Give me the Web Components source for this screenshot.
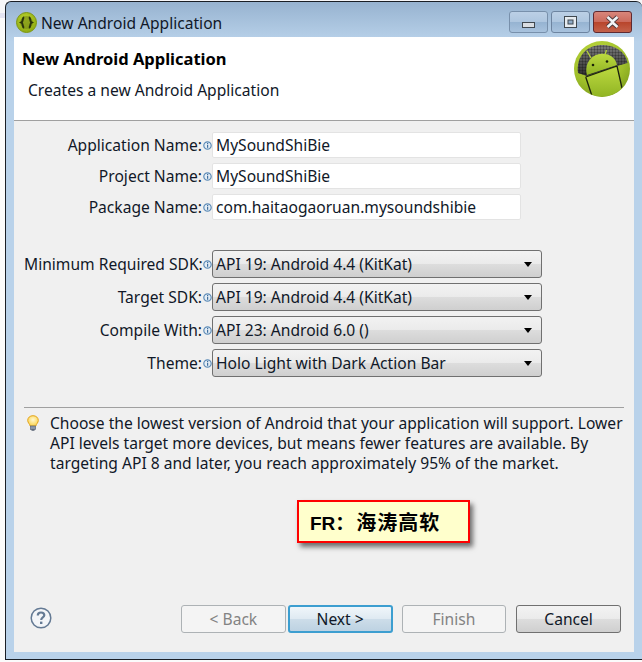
<!DOCTYPE html>
<html><head><meta charset="utf-8">
<style>
html,body{margin:0;padding:0;background:#fff;}
body{width:642px;height:662px;overflow:hidden;font:15.6px "Noto Sans","Open Sans",sans-serif;color:#101828;background:linear-gradient(#f6f6f8 13px,#e4e4f2 13px,#e4e4f2 18px,#fbfbfb 18px);}
</style></head><body>
<wizard-window heading="New Android Application">
  <wizard-header slot="header" title-text="New Android Application" sub="Creates a new Android Application"></wizard-header>
  <form-grid>
    <text-row label="Application Name:" value="MySoundShiBie"></text-row>
    <text-row label="Project Name:" value="MySoundShiBie"></text-row>
    <text-row label="Package Name:" value="com.haitaogaoruan.mysoundshibie"></text-row>
    <combo-row label="Minimum Required SDK:" value="API 19: Android 4.4 (KitKat)" style="margin-top:25px"></combo-row>
    <combo-row label="Target SDK:" value="API 19: Android 4.4 (KitKat)"></combo-row>
    <combo-row label="Compile With:" value="API 23: Android 6.0 ()"></combo-row>
    <combo-row label="Theme:" value="Holo Light with Dark Action Bar"></combo-row>
  </form-grid>
  <tip-box>Choose the lowest version of Android that your application will support. Lower API levels target more devices, but means fewer features are available. By targeting API 8 and later, you reach approximately 95% of the market.</tip-box>
  <button-bar slot="footer">
    <wiz-button disabled style="margin-left:0">&lt; Back</wiz-button>
    <wiz-button default style="margin-left:2px">Next &gt;</wiz-button>
    <wiz-button disabled style="margin-left:9px">Finish</wiz-button>
    <wiz-button style="margin-left:9px">Cancel</wiz-button>
  </button-bar>
  <note-callout slot="overlay">FR：<span>海涛高软</span></note-callout>
</wizard-window>
<script>
function def(name,css,html){
  customElements.define(name,class extends HTMLElement{
    connectedCallback(){
      if(this.shadowRoot)return;
      const r=this.attachShadow({mode:'open'});
      const a=n=>this.getAttribute(n)||'';
      r.innerHTML='<style>'+css+'</style>'+(typeof html==='function'?html(a):html);
    }
  });
}
const infoIcon='<svg width="9" height="9" viewBox="0 0 9 9"><circle cx="4.5" cy="4.5" r="3.7" fill="#e4edf5" stroke="#5f8db8" stroke-width="1.2"/><rect x="4" y="2" width="1.2" height="1.1" fill="#3f6f9f"/><rect x="4" y="3.8" width="1.2" height="3" fill="#3f6f9f"/></svg>';

def('wizard-window',`
:host{display:block;position:relative;width:637px;height:659px;margin:1px 0 0 5px;box-sizing:border-box;border:1px solid #1a1f26;border-right:0;border-radius:6px 6px 0 0;
  background:linear-gradient(#97b3d0,#b9d2ea 40px);padding:0 8px 7px 8px;overflow:hidden}
.title{height:35px;display:flex;align-items:center;gap:4px;padding:6px 0 0 2px;color:#101828;font-size:15.6px;box-sizing:border-box}
.ctrls{margin-left:auto;margin-right:2px;margin-top:-2px;display:flex;gap:3px}
.ctrls svg{display:block}
.body{height:615px;display:flex;flex-direction:column;background:#f0f0f0}
.main{flex:1}
`,a=>`
<div class="title">
 <svg width="21" height="21" viewBox="0 0 21 21"><defs><radialGradient id="t" cx=".45" cy=".35" r=".7"><stop offset="0" stop-color="#bcd62c"/><stop offset="1" stop-color="#8ba612"/></radialGradient></defs><circle cx="10.5" cy="10.5" r="10" fill="url(#t)" stroke="#7d9612"/><circle cx="10.5" cy="10.5" r="6.5" fill="#7d9218" opacity=".7"/><path d="M8.200 5.200C6 5.500 7.400 9.600 5.400 10.500 7.400 11.400 6 15.500 8.200 15.800M12.800 5.200C15 5.500 13.600 9.600 15.600 10.500 13.600 11.400 15 15.500 12.800 15.800" fill="none" stroke="#2a340c" stroke-width="2"/></svg>
 <span>${a('heading')}</span>
 <div class="ctrls">
  <svg width="39" height="22" viewBox="0 0 39 22"><defs><linearGradient id="b1" x1="0" y1="0" x2="0" y2="1"><stop offset="0" stop-color="#bcd0e6"/><stop offset=".5" stop-color="#aec6df"/><stop offset=".5" stop-color="#95b3d1"/><stop offset="1" stop-color="#a9c3de"/></linearGradient></defs><rect x=".5" y=".5" width="38" height="21" rx="2.5" fill="url(#b1)" stroke="#7890ab"/><rect x="13.500" y="11.500" width="12" height="5" fill="#d9dde2" stroke="#40484f"/></svg>
  <svg width="39" height="22" viewBox="0 0 39 22"><rect x=".5" y=".5" width="38" height="21" rx="2.5" fill="url(#b1)" stroke="#6d84a0"/><rect x="13.500" y="5.500" width="12" height="11" fill="#e6ebf0" stroke="#40484f"/><rect x="17" y="9" width="5" height="4" fill="#8fabc8" stroke="#40484f"/></svg>
  <svg width="39" height="22" viewBox="0 0 39 22"><defs><linearGradient id="b3" x1="0" y1="0" x2="0" y2="1"><stop offset="0" stop-color="#d9877c"/><stop offset=".5" stop-color="#cb6a5c"/><stop offset=".5" stop-color="#b8442b"/><stop offset="1" stop-color="#c4634c"/></linearGradient></defs><rect x=".5" y=".5" width="38" height="21" rx="2.5" fill="url(#b3)" stroke="#5e2a32"/><path d="M14.500 6 19.500 10.400 24.500 6M14.500 16 19.500 11.600 24.500 16" fill="none" stroke="#4b3a3e" stroke-width="4.400"/><path d="M14.500 6 19.500 10.400 24.500 6M14.500 16 19.500 11.600 24.500 16M19.500 10.400V11.600" fill="none" stroke="#f3f4f6" stroke-width="2.600"/></svg>
 </div>
</div>
<div class="body">
 <slot name="header"></slot>
 <div class="main"><slot></slot></div>
 <slot name="footer"></slot>
</div>
<slot name="overlay"></slot>`);

def('wizard-header',`
:host{display:flex;position:relative;height:84px;box-sizing:border-box;background:#fff;border-bottom:1px solid #a0a0a0;color:#101828}
.t{flex:1;padding-left:8px}
h1{margin:11px 0 0;font-size:16.5px;font-weight:700;line-height:22px;color:#000}
p{margin:9px 0 0 6px;font-size:15.6px;line-height:22px}
svg{margin:3px 3px 0 0;flex:none}
`,a=>`
<div class="t"><h1>${a('title-text')}</h1><p>${a('sub')}</p></div>
<svg width="58" height="58" viewBox="0 0 58 58">
 <defs>
  <radialGradient id="g" cx=".4" cy=".25" r=".85"><stop offset="0" stop-color="#bcd63e"/><stop offset=".6" stop-color="#a0c02a"/><stop offset="1" stop-color="#78981a"/></radialGradient>
  <linearGradient id="d" x1="0" y1="0" x2="0" y2="1"><stop offset="0" stop-color="#7a7a7a"/><stop offset="1" stop-color="#2e2e2e"/></linearGradient>
  <linearGradient id="a" x1="0" y1="0" x2="0" y2="1"><stop offset="0" stop-color="#bcd940"/><stop offset="1" stop-color="#8fb322"/></linearGradient>
  <pattern id="p" width="3" height="3" patternUnits="userSpaceOnUse"><rect width="1" height="3" fill="#000" opacity=".22"/><rect width="3" height="1" fill="#000" opacity=".22"/></pattern>
  <clipPath id="c"><circle cx="29" cy="29" r="27.500"/></clipPath>
 </defs>
 <circle cx="29" cy="29" r="28" fill="url(#g)"/>
 <g clip-path="url(#c)">
  <path d="M5 33C3 15 15 5 29 5 42 5 53 12 54.500 23L44 26 14 36Z" fill="url(#d)"/>
  <path d="M5 33C3 15 15 5 29 5 42 5 53 12 54.500 23L44 26 14 36Z" fill="url(#p)"/>
  <path d="M14 35C11 24 18 15 27 14 36 13 42 17 44 25Z" fill="url(#a)"/>
  <path d="M14 37.500 45 27 49 58H20Z" fill="url(#a)"/>
  <path d="M12.700 37 44 26M12.700 37 19 56M44 26 49 48" fill="none" stroke="#1c220e" stroke-width="1.300"/>
  <path d="M18 18 14 11M32 15 33.500 10" stroke="#b4d03c" stroke-width="1.400" fill="none"/>
  <circle cx="20" cy="25" r="1.300" fill="#1b2208"/><circle cx="34" cy="21.500" r="1.300" fill="#1b2208"/>
 </g>
</svg>`);

def('form-grid',`:host{display:flex;flex-direction:column;padding:11px 0 0 10px}`,'<slot></slot>');

const rowCss=`
:host{display:flex;align-items:center;margin-bottom:5px}
.l{width:178px;text-align:right;line-height:20px;white-space:nowrap;color:#101828}
.i{width:10px;display:flex;justify-content:center;flex:none}
svg{display:block}
`;
def('text-row',rowCss+`
:host{height:26px}
.f{width:309px;height:26px;box-sizing:border-box;background:#fff;border:1px solid #e3e3e3;border-radius:2px;padding-left:3px;line-height:24px;white-space:nowrap}
`,a=>`<div class="l">${a('label')}</div><div class="i">${infoIcon}</div><div class="f">${a('value')}</div>`);

def('combo-row',rowCss+`
:host{height:28px}
.f{width:330px;height:28px;box-sizing:border-box;border:1px solid #707070;border-radius:3px;padding:0 9px 0 3px;display:flex;align-items:center;justify-content:space-between;white-space:nowrap;background:linear-gradient(#f2f2f2 0,#ebebeb 48%,#dddddd 50%,#cfcfcf 100%)}
.a{width:0;height:0;border-left:4.5px solid transparent;border-right:4.5px solid transparent;border-top:5px solid #000}
`,a=>`<div class="l">${a('label')}</div><div class="i">${infoIcon}</div><div class="f"><span>${a('value')}</span><span class="a"></span></div>`);

def('tip-box',`
:host{display:block;margin:25px 10px 0 10px;border-top:1px solid #a0a0a0;padding-top:5px;position:relative}
.w{display:flex;gap:11px;padding-left:3px}
svg{flex:none;margin-top:2px}
.t{line-height:20px;color:#101828;width:578px}
`,`<div class="w"><svg width="12" height="16" viewBox="0 0 12 16"><defs><radialGradient id="b" cx=".5" cy=".4" r=".6"><stop offset="0" stop-color="#fff8d0"/><stop offset="1" stop-color="#fbd34c"/></radialGradient></defs><path d="M6 .7C2.800 .7 .7 2.800 .7 5.400c0 2.400 2 3.400 2.500 5.600h5.600c.5-2.200 2.500-3.200 2.500-5.600C11.300 2.800 9.200 .7 6 .7Z" fill="url(#b)" stroke="#e3a41e"/><rect x="3.500" y="11" width="5" height="3.500" fill="#8a96a8" stroke="#5b6678" stroke-width=".7"/><rect x="4.500" y="14.500" width="3" height="1.200" fill="#4b5668"/></svg><div class="t"><slot></slot></div></div>`);

def('button-bar',`
:host{display:flex;align-items:center;height:48px;padding:0 13px 0 0;margin-bottom:9px;position:relative}
.h{margin:-2px 129px 0 16px;display:block;flex:none}
::slotted(wiz-button:last-child){margin-left:10px !important}
`,`<svg class="h" width="22" height="22" viewBox="0 0 22 22"><circle cx="11" cy="11" r="9.800" fill="#f3f5f8" stroke="#647a94" stroke-width="1.500"/><path d="M7.800 8.500C7.800 6.500 9.200 5.500 11 5.500S14.300 6.500 14.300 8.300C14.300 10.500 11.200 10.500 11.200 13" fill="none" stroke="#647a94" stroke-width="2.200"/><rect x="10" y="14.600" width="2.400" height="2.400" fill="#647a94"/></svg><slot></slot>`);

def('wiz-button',`
:host{display:block;width:105px;height:28px;box-sizing:border-box;border:1px solid #707070;border-radius:3px;text-align:center;line-height:26px;color:#101828;white-space:nowrap;background:linear-gradient(#f3f3f3 0,#ebebeb 48%,#dddddd 50%,#cfcfcf 100%)}
:host([disabled]){background:#f4f4f4;border-color:#adb2b5;color:#838383}
:host([default]){border-color:#3c9ed0;border-width:2px;line-height:24px;background:linear-gradient(#f0f6fa 0,#dfeaf2 48%,#cddde9 50%,#bdd2e2 100%)}
`,'<slot></slot>');

def('note-callout',`
:host{position:absolute;left:291px;top:498px;width:173px;height:43px;box-sizing:border-box;border:2px solid #f00;background:#ffffcc;box-shadow:3px 4px 5px rgba(0,0,0,.55);display:flex;align-items:center;padding-left:11px;font:700 19px "Liberation Sans","Noto Sans CJK SC",sans-serif;color:#000;white-space:nowrap}
::slotted(span){font:700 20px "Noto Sans CJK SC",sans-serif;margin-left:2px;letter-spacing:1px}
`,'<slot></slot>');
</script>
</body></html>
